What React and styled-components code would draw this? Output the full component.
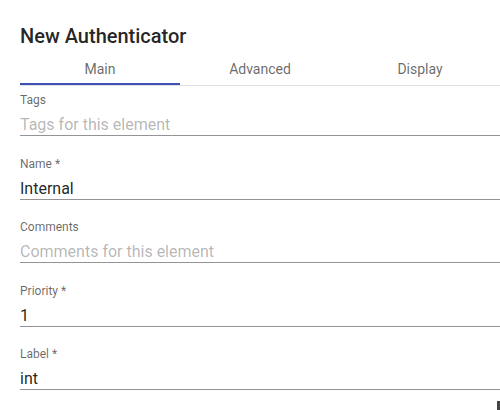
import styled, { createGlobalStyle } from "styled-components";

const GlobalStyle = createGlobalStyle`
    html, body {
        margin: 0;
        padding: 0;
        background: #fff;
        overflow: hidden;
    }

    body {
        font-family: Roboto, "Liberation Sans", sans-serif;
    }
`;

const Dialog = styled.div`
    position: relative;
    width: 500px;
    height: 410px;
    padding-left: 20px;
    box-sizing: border-box;
    overflow: hidden;
`;

const Title = styled.h2`
    margin: 20px 0 3px;
    font-size: 20px;
    line-height: 32px;
    font-weight: 500;
    color: rgba(0, 0, 0, 0.87);
`;

const TabRow = styled.div`
    display: flex;
    width: 480px;
    border-bottom: 1px solid rgba(0, 0, 0, 0.12);
`;

const Tab = styled.div`
    position: relative;
    flex: 1;
    height: 28px;
    padding-bottom: 2px;
    display: flex;
    align-items: center;
    justify-content: center;
    font-size: 14px;
    font-weight: 400;
    color: rgba(0, 0, 0, 0.6);

    &::after {
        content: "";
        display: ${(p) => (p.$active ? "block" : "none")};
        position: absolute;
        left: 0;
        right: 0;
        bottom: 0;
        height: 2px;
        background: #3f51b5;
    }
`;

const Form = styled.div`
    display: flex;
    flex-direction: column;
    gap: 19.5px;
    padding-top: 6px;
    width: 480px;
`;

const Field = styled.label`
    display: flex;
    flex-direction: column;
    gap: 7px;
    border-bottom: 1px solid rgba(0, 0, 0, 0.42);
`;

const FieldLabel = styled.span`
    font-size: 12px;
    line-height: 16px;
    color: rgba(0, 0, 0, 0.6);
`;

const Input = styled.input`
    border: none;
    outline: none;
    padding: 0;
    margin: 0;
    height: 20px;
    font-family: Roboto, "Liberation Sans", sans-serif;
    font-size: 16px;
    line-height: 20px;
    color: rgba(0, 0, 0, 0.87);
    background: transparent;

    &::placeholder {
        color: rgba(0, 0, 0, 0.3);
    }
`;

const EdgeMark = styled.div`
    position: absolute;
    right: 0;
    bottom: 0;
    width: 3px;
    height: 9px;
    background: #444;
`;

const fields = [
    { label: "Tags", placeholder: "Tags for this element" },
    { label: "Name *", value: "Internal" },
    { label: "Comments", placeholder: "Comments for this element" },
    { label: "Priority *", value: "1" },
    { label: "Label *", value: "int" },
];

export default function App() {
    return (
        <>
            <GlobalStyle />
            <Dialog>
                <Title>New Authenticator</Title>
                <TabRow>
                    <Tab $active>Main</Tab>
                    <Tab>Advanced</Tab>
                    <Tab>Display</Tab>
                </TabRow>
                <Form>
                    {fields.map((f) => (
                        <Field key={f.label}>
                            <FieldLabel>{f.label}</FieldLabel>
                            <Input
                                readOnly
                                placeholder={f.placeholder}
                                defaultValue={f.value}
                            />
                        </Field>
                    ))}
                </Form>
                <EdgeMark />
            </Dialog>
        </>
    );
}
